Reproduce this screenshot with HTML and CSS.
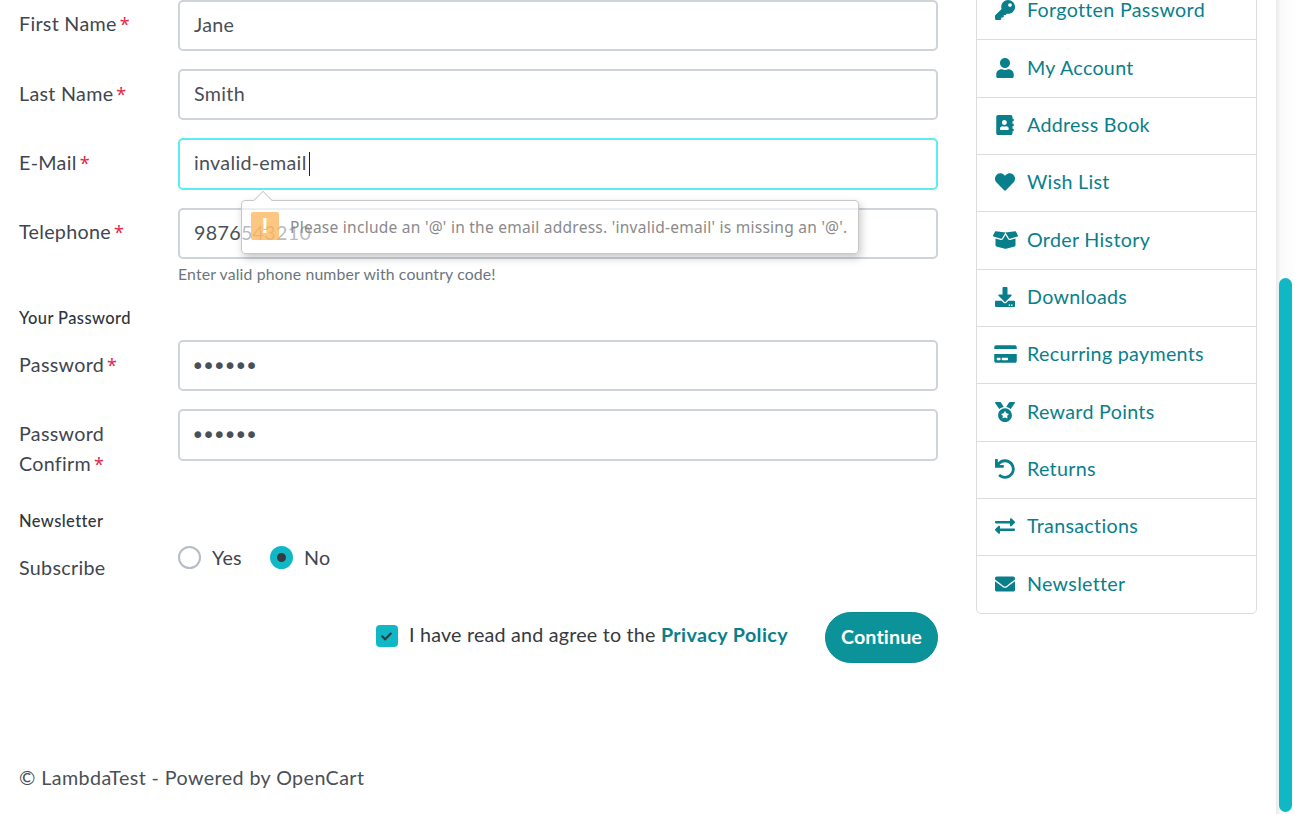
FILE: index.html
```html
<!DOCTYPE html>
<html lang="en">
<head>
<meta charset="utf-8">
<title>Register Account</title>
<link rel="stylesheet" href="styles.css">
</head>
<body>
<div class="page">
  <main class="main">
    <form class="form">
      <div class="row"><label class="label">First Name<span class="req">*</span></label><div class="field"><div class="input">Jane</div></div></div>
      <div class="row"><label class="label">Last Name<span class="req">*</span></label><div class="field"><div class="input">Smith</div></div></div>
      <div class="row"><label class="label">E-Mail<span class="req">*</span></label><div class="field"><div class="input focus">invalid-email<span class="caret"></span></div></div></div>
      <div class="row phone"><label class="label">Telephone<span class="req">*</span></label><div class="field"><div class="input">9876543210</div><div class="help">Enter valid phone number with country code!</div></div></div>
      <h2 class="legend pw">Your Password</h2>
      <div class="row"><label class="label">Password<span class="req">*</span></label><div class="field"><div class="input dots">••••••</div></div></div>
      <div class="row confirm"><label class="label">Password Confirm<span class="req">*</span></label><div class="field"><div class="input dots">••••••</div></div></div>
      <h2 class="legend nl">Newsletter</h2>
      <div class="row sub">
        <label class="label">Subscribe</label>
        <div class="radios">
          <span class="radio-item"><span class="radio"></span>Yes</span>
          <span class="radio-item"><span class="radio on"></span>No</span>
        </div>
      </div>
      <div class="agree">
        <span class="check"><svg viewBox="0 0 512 512"><path d="M173.898 439.404l-166.4-166.4c-9.997-9.997-9.997-26.206 0-36.204l36.203-36.204c9.997-9.998 26.207-9.998 36.204 0L192 312.69 432.095 72.596c9.997-9.997 26.207-9.997 36.204 0l36.203 36.204c9.997 9.997 9.997 26.206 0 36.204l-294.4 294.401c-9.998 9.997-26.207 9.997-36.204-.001z"/></svg></span>
        <span class="agree-text">I have read and agree to the <a class="policy">Privacy Policy</a></span>
        <button class="btn" type="button">Continue</button>
      </div>
    </form>
    <footer class="footer">© LambdaTest - Powered by OpenCart</footer>
  </main>
  <aside class="side">
    <a class="item"><span class="ico"><svg width="20" height="20" viewBox="0 0 512 512"><path d="M512 176.001C512 273.203 433.202 352 336 352c-11.22 0-22.19-1.062-32.827-3.069l-24.012 27.014A23.999 23.999 0 0 1 261.223 384H224v40c0 13.255-10.745 24-24 24h-40v40c0 13.255-10.745 24-24 24H24c-13.255 0-24-10.745-24-24v-78.059c0-6.365 2.529-12.47 7.029-16.971l161.802-161.802C163.108 213.814 160 195.271 160 176 160 78.798 238.797.001 335.999 0 433.488-.001 512 78.511 512 176.001zM336 128c0 26.51 21.49 48 48 48s48-21.49 48-48-21.49-48-48-48-48 21.49-48 48z"/></svg></span>Forgotten Password</a>
    <a class="item"><span class="ico"><svg width="18" height="20" viewBox="0 0 448 512"><path d="M224 256c70.7 0 128-57.3 128-128S294.7 0 224 0 96 57.3 96 128s57.3 128 128 128zm89.6 32h-16.7c-22.2 10.2-46.9 16-72.9 16s-50.6-5.8-72.9-16h-16.7C60.2 288 0 348.2 0 422.4V464c0 26.5 21.5 48 48 48h352c26.5 0 48-21.5 48-48v-41.6c0-74.2-60.2-134.4-134.4-134.4z"/></svg></span>My Account</a>
    <a class="item"><span class="ico"><svg width="18" height="20" viewBox="0 0 448 512"><path d="M436 160c6.6 0 12-5.4 12-12v-40c0-6.6-5.4-12-12-12h-20V48c0-26.5-21.5-48-48-48H48C21.5 0 0 21.5 0 48v416c0 26.5 21.5 48 48 48h320c26.5 0 48-21.5 48-48v-48h20c6.6 0 12-5.4 12-12v-40c0-6.6-5.4-12-12-12h-20v-64h20c6.6 0 12-5.4 12-12v-40c0-6.6-5.4-12-12-12h-20v-64h20zm-228-32c35.3 0 64 28.7 64 64s-28.7 64-64 64-64-28.7-64-64 28.7-64 64-64zm112 236.8c0 10.6-10 19.2-22.4 19.2H118.4C106 384 96 375.4 96 364.8v-19.2c0-31.8 30.1-57.6 67.2-57.6h5c12.3 5.1 25.7 8 39.8 8s27.6-2.9 39.8-8h5c37.1 0 67.2 25.8 67.2 57.6v19.2z"/></svg></span>Address Book</a>
    <a class="item"><span class="ico"><svg width="20" height="20" viewBox="0 0 512 512"><path d="M462.3 62.6C407.5 15.9 326 24.3 275.7 76.2L256 96.5l-19.7-20.3C186.1 24.3 104.5 15.9 49.7 62.6c-62.8 53.6-66.1 149.8-9.9 207.9l193.5 199.8c12.5 12.9 32.8 12.9 45.3 0l193.5-199.8c56.3-58.1 53-154.3-9.8-207.9z"/></svg></span>Wish List</a>
    <a class="item"><span class="ico"><svg width="25" height="20" viewBox="0 0 640 512"><path d="M425.7 256c-16.9 0-32.8-9-41.4-23.4L320 126l-64.2 106.6c-8.7 14.5-24.6 23.5-41.5 23.5-4.5 0-9-.6-13.3-1.9L64 215v178c0 14.7 10 27.5 24.2 31l216.2 54.1c10.2 2.5 20.9 2.5 31 0L551.8 424c14.2-3.6 24.2-16.4 24.2-31V215l-137 39.1c-4.3 1.3-8.8 1.9-13.3 1.9zm212.6-112.2L586.8 41c-3.1-6.2-9.8-9.8-16.7-8.9L320 64l91.7 152.1c3.8 6.3 11.4 9.3 18.5 7.3l197.9-56.5c9.9-2.9 14.7-13.9 10.2-23.1zM53.2 41L1.7 143.8c-4.6 9.2.3 20.2 10.1 23l197.9 56.5c7.1 2 14.7-1 18.5-7.3L320 64 69.8 32.1c-6.9-.8-13.5 2.7-16.6 8.9z"/></svg></span>Order History</a>
    <a class="item"><span class="ico"><svg width="20" height="20" viewBox="0 0 512 512"><path d="M216 0h80c13.3 0 24 10.7 24 24v168h87.7c17.8 0 26.7 21.5 14.1 34.1L269.7 378.3c-7.5 7.5-19.8 7.5-27.3 0L90.1 226.1c-12.6-12.6-3.7-34.1 14.1-34.1H192V24c0-13.3 10.7-24 24-24zm296 376v112c0 13.3-10.7 24-24 24H24c-13.3 0-24-10.7-24-24V376c0-13.3 10.7-24 24-24h146.7l49 49c20.1 20.1 52.5 20.1 72.6 0l49-49H488c13.3 0 24 10.7 24 24zm-124 88c0-11-9-20-20-20s-20 9-20 20 9 20 20 20 20-9 20-20zm64 0c0-11-9-20-20-20s-20 9-20 20 9 20 20 20 20-9 20-20z"/></svg></span>Downloads</a>
    <a class="item"><span class="ico"><svg width="23" height="20" viewBox="0 0 576 512"><path d="M0 432c0 26.5 21.5 48 48 48h480c26.5 0 48-21.5 48-48V256H0v176zm192-68c0-6.6 5.4-12 12-12h136c6.6 0 12 5.4 12 12v40c0 6.6-5.4 12-12 12H204c-6.6 0-12-5.4-12-12v-40zm-128 0c0-6.6 5.4-12 12-12h72c6.6 0 12 5.4 12 12v40c0 6.6-5.4 12-12 12H76c-6.6 0-12-5.4-12-12v-40zM576 80v48H0V80c0-26.5 21.5-48 48-48h480c26.5 0 48 21.5 48 48z"/></svg></span>Recurring payments</a>
    <a class="item"><span class="ico"><svg width="20" height="20" viewBox="0 0 512 512"><path d="M223.75 130.75L154.62 15.54A31.997 31.997 0 0 0 127.18 0H16.03C3.08 0-4.5 14.57 2.92 25.18l111.27 158.96c29.72-27.77 67.52-46.83 109.56-53.39zM495.97 0H384.82c-11.24 0-21.66 5.9-27.44 15.54l-69.13 115.21c42.04 6.56 79.84 25.62 109.56 53.38L509.08 25.18C516.5 14.57 508.92 0 495.97 0zM256 160c-97.2 0-176 78.8-176 176s78.8 176 176 176 176-78.8 176-176-78.8-176-176-176zm92.52 157.26l-37.93 36.96 8.97 52.22c1.6 9.36-8.26 16.51-16.65 12.09L256 393.88l-46.9 24.65c-8.4 4.45-18.25-2.74-16.65-12.09l8.97-52.22-37.93-36.96c-6.82-6.64-3.05-18.23 6.35-19.59l52.43-7.64 23.43-47.52c2.11-4.28 6.19-6.39 10.28-6.39 4.11 0 8.22 2.14 10.33 6.39l23.43 47.52 52.43 7.64c9.4 1.36 13.17 12.95 6.35 19.59z"/></svg></span>Reward Points</a>
    <a class="item"><span class="ico"><svg width="20" height="20" viewBox="0 0 512 512"><path d="M212.333 224.333H12c-6.627 0-12-5.373-12-12V12C0 5.373 5.373 0 12 0h48c6.627 0 12 5.373 12 12v78.112C117.773 39.279 184.26 7.47 258.175 8.007c136.906.994 246.448 111.623 246.157 248.532C504.041 393.258 393.12 504 256.333 504c-64.089 0-122.496-24.313-166.51-64.215-5.099-4.622-5.334-12.554-.467-17.42l33.967-33.967c4.474-4.474 11.662-4.717 16.401-.525C170.76 415.336 211.58 432 256.333 432c97.268 0 176-78.716 176-176 0-97.267-78.716-176-176-176-58.496 0-110.28 28.476-142.274 72.333h98.274c6.627 0 12 5.373 12 12v48c0 6.627-5.373 12-12 12z"/></svg></span>Returns</a>
    <a class="item"><span class="ico"><svg width="20" height="20" viewBox="0 0 512 512"><path d="M0 168v-16c0-13.255 10.745-24 24-24h360V80c0-21.367 25.899-32.042 40.971-16.971l80 80c9.372 9.373 9.372 24.569 0 33.941l-80 80C409.956 271.982 384 261.456 384 240v-48H24c-13.255 0-24-10.745-24-24zm488 152H128v-48c0-21.314-25.862-32.08-40.971-16.971l-80 80c-9.372 9.373-9.372 24.569 0 33.941l80 80C102.057 463.997 128 453.437 128 432v-48h360c13.255 0 24-10.745 24-24v-16c0-13.255-10.745-24-24-24z"/></svg></span>Transactions</a>
    <a class="item"><span class="ico"><svg width="20" height="20" viewBox="0 0 512 512"><path d="M502.3 190.8c3.9-3.1 9.7-.2 9.7 4.7V400c0 26.5-21.5 48-48 48H48c-26.5 0-48-21.5-48-48V195.6c0-5 5.7-7.8 9.7-4.7 22.4 17.4 52.1 39.5 154.1 113.6 21.1 15.4 56.7 47.8 92.2 47.6 35.7.3 72-32.8 92.3-47.6 102-74.1 131.6-96.3 154-113.7zM256 320c23.2.4 56.6-29.2 73.4-41.4 132.7-96.3 142.8-104.7 173.4-128.7 5.8-4.5 9.2-11.5 9.2-18.9v-19c0-26.5-21.5-48-48-48H48C21.5 64 0 85.5 0 112v19c0 7.4 3.4 14.3 9.2 18.9 30.6 23.9 40.7 32.4 173.4 128.7 16.8 12.2 50.2 41.8 73.4 41.4z"/></svg></span>Newsletter</a>
  </aside>
</div>
<div class="bubble">
  <span class="bubble-arrow"></span>
  <span class="warn">!</span>
  <span class="bubble-text">Please include an '@' in the email address. 'invalid-email' is missing an '@'.</span>
</div>
<div class="scrollbar"><div class="thumb"></div></div>
</body>
</html>
```
FILE: styles.css
```css
* { box-sizing: border-box; }
html, body { margin: 0; height: 814px; overflow: hidden; background: #fff; }
body { font-family: "Lato", "Noto Sans", sans-serif; font-size: 19.7px; letter-spacing: .3px; line-height: 1.5; color: #3f4650; }
.page { display: flex; gap: 38px; padding-left: 19px; width: 1257px; }
.main { width: 919px; flex: none; margin-top: -0.35px; }
.form { display: flex; flex-direction: column; }
.row { display: grid; grid-template-columns: 159px 760px; margin-bottom: 18.2px; }
.label { padding-top: 9.7px; line-height: 30px; }
.req { color: #e3264b; margin-left: 3px; font: 18px/0 "Noto Sans", sans-serif; }
.input { height: 51.2px; border: 2px solid #ced4da; border-radius: 5px; padding: 0 14px; line-height: 46.6px; color: #495057; background: #fff; }
.focus { border-color: #5cedf3; position: relative; }
.caret { display: inline-block; width: 1px; height: 24px; background: #222; vertical-align: -6px; margin-left: 2px; }
.dots { font-family: "DejaVu Sans", sans-serif; font-size: 23px; letter-spacing: -2.8px; line-height: 49.5px; padding-left: 11px; }
.phone { margin-bottom: 0; }
.help { font-size: 15.8px; letter-spacing: .15px; line-height: 23px; margin-top: 3px; color: #6c757d; }
.legend { font-size: 16.5px; font-weight: 500; letter-spacing: .4px; line-height: 22px; margin: 0; color: #2f353d; }
.pw { margin: 22.5px 0 10.5px; }
.confirm { margin-bottom: 0; }
.nl { margin: 31px 0 21px; }
.sub { margin-bottom: 0; }
.sub .label { padding-top: 0; }
.radios { display: flex; gap: 28px; align-items: center; margin-top: -7px; height: 23px; }
.radio-item { display: flex; align-items: center; gap: 11px; }
.radio { width: 23px; height: 23px; border-radius: 50%; border: 2px solid #b4bcc4; background: #fff; }
.radio.on { border: 7px solid #10b8c6; background: #343a40; }
.agree { display: flex; justify-content: flex-end; align-items: center; margin-top: 29px; height: 51px; }
.check { width: 22px; height: 22px; border-radius: 4px; background: #10b8c6; display: flex; align-items: center; justify-content: center; margin-right: 11px; margin-top: -3px; }
.check svg { width: 11px; height: 11px; fill: #343a40; }
.agree-text { margin-right: 37px; margin-top: -5px; color: #343a40; letter-spacing: .22px; }
.policy { color: #087f8b; font-weight: 700; letter-spacing: .4px; }
.btn { width: 113px; height: 51px; border: 1px solid #0a8a92; border-radius: 26px; background: #0c9299; color: #fff; font: 700 19.7px "Lato", sans-serif; letter-spacing: .1px; padding: 0 0 2px; }
.footer { margin-top: 100px; line-height: 30px; color: #495057; letter-spacing: .42px; }
.side { width: 281px; flex: none; margin-top: -18px; border: 1px solid #ddd; border-radius: 0 0 5px 5px; align-self: flex-start; }
.item { display: flex; align-items: center; height: 57.35px; border-bottom: 1px solid #ddd; color: #0a7f8c; padding: 0 0 2px 16px; }
.item:last-child { border-bottom: 0; height: 56.6px; }
.ico { width: 24px; margin-right: 10px; flex: none; display: flex; align-items: center; justify-content: center; }
.ico svg { fill: #087f8b; flex: none; }
.bubble { position: absolute; left: 241px; top: 200px; width: 618px; height: 54px; border: 1px solid #c8c8c8; border-radius: 4px; box-shadow: 2px 4px 8px rgba(0,0,0,.22); display: flex; align-items: center; padding-left: 9px; background: rgba(255,255,255,.62); }
.bubble-arrow { position: absolute; left: 10px; top: -10px; width: 20px; height: 10px; overflow: hidden; }
.bubble-arrow::before { content: ""; position: absolute; left: 3px; top: 3px; width: 14px; height: 14px; background: #fff; border: 1px solid #c8c8c8; transform: rotate(45deg); }
.warn { width: 28px; height: 28px; border-radius: 2px; background: rgba(253,178,80,.72); color: #fff; font: 700 22px/28px "Liberation Sans", sans-serif; letter-spacing: 0; text-align: center; margin-top: -2px; }
.bubble-text { margin-left: 11px; font: 15.5px/1.3 "Noto Sans", sans-serif; letter-spacing: .26px; color: #8a8a8a; white-space: nowrap; }
.scrollbar { position: absolute; left: 1276px; top: 0; width: 19px; height: 814px; background: linear-gradient(90deg, #e9e9e9, #fafafa 25%, #fff 100%); }
.thumb { position: absolute; left: 3px; top: 278px; width: 13px; height: 534px; border-radius: 7px; background: #10b8c6; }
```
